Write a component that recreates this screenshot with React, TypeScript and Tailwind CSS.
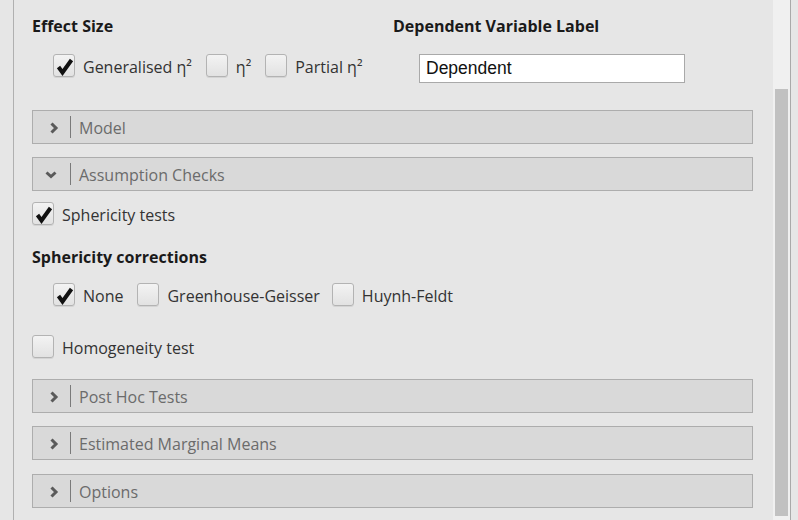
import React from "react";

const font = { fontFamily: '"Open Sans", "Noto Sans", sans-serif' };

function Check({ checked }: { checked?: boolean }) {
  return (
    <div className="relative w-[22px] h-[23px] shrink-0 rounded-[3px] border border-[#b3b3b3] bg-gradient-to-b from-[#f3f3f3] to-[#e2e2e2] shadow-[0_1px_0_rgba(0,0,0,0.08)]">
      {checked && (
        <svg className="absolute left-0 top-0" width="22" height="23" viewBox="0 0 22 23">
          <path d="M4.5 12 L8.5 17.5 L17.5 5" fill="none" stroke="#111" strokeWidth="4" strokeLinejoin="miter" strokeLinecap="butt" />
        </svg>
      )}
    </div>
  );
}

function CheckItem({ checked, label, gapAfter = 0 }: { checked?: boolean; label: string; gapAfter?: number }) {
  return (
    <div className="flex items-center h-[23px]" style={gapAfter ? { marginRight: gapAfter } : undefined}>
      <Check checked={checked} />
      <span className="ml-[8px] mt-[3px] text-[16px] leading-[20px] text-[#333333]">{label}</span>
    </div>
  );
}

function Section({ title, open }: { title: string; open?: boolean }) {
  return (
    <div className="flex items-center h-[34px] border border-[#adadad] bg-[#d9d9d9]">
      <div className="w-[37px] flex items-center justify-center">
        {open ? (
          <svg width="12" height="10" viewBox="0 0 12 10" className="mt-[2px] mr-[2px]">
            <path d="M1.5 2.5 L6 6.5 L10.5 2.5" fill="none" stroke="#5a5a5a" strokeWidth="3" />
          </svg>
        ) : (
          <svg width="10" height="12" viewBox="0 0 10 12" className="ml-[4px] mt-[1px]">
            <path d="M2.5 1.5 L7 6 L2.5 10.5" fill="none" stroke="#5a5a5a" strokeWidth="3" />
          </svg>
        )}
      </div>
      <div className="w-px h-[22px] bg-[#7a7a7a]" />
      <span className="ml-[8px] mt-[1px] text-[16px] leading-[20px] text-[#6b6b6b]">{title}</span>
    </div>
  );
}

export default function App() {
  return (
    <div className="flex w-[798px] h-[520px] bg-[#e6e6e6] overflow-hidden" style={font}>
      <div className="w-[13px] shrink-0" />
      <div className="flex-1 flex flex-col border-l border-[#b0b0b0] pl-[18px] pr-[20px] pt-[16px]">
        <div className="flex">
          <div className="w-[361px] shrink-0">
            <div className="text-[16px] leading-[20px] font-bold text-[#1a1a1a]">Effect Size</div>
            <div className="flex items-center mt-[18px] pl-[21px]">
              <CheckItem checked label="Generalised η²" gapAfter={14} />
              <CheckItem label="η²" gapAfter={14} />
              <CheckItem label="Partial η²" />
            </div>
          </div>
          <div>
            <div className="text-[16px] leading-[20px] font-bold text-[#1a1a1a]">Dependent Variable Label</div>
            <div className="mt-[18px] ml-[26px] w-[266px] h-[29px] border border-[#a9a9a9] bg-white flex items-center pl-[6px]">
              <span className="text-[17.5px] text-[#111]" style={{ fontFamily: '"Liberation Sans", Arial, sans-serif' }}>Dependent</span>
            </div>
          </div>
        </div>

        <div className="mt-[27px]">
          <Section title="Model" />
        </div>
        <div className="mt-[13px]">
          <Section title="Assumption Checks" open />
        </div>
        <div className="mt-[11px]">
          <CheckItem checked label="Sphericity tests" />
        </div>
        <div className="mt-[22px] text-[16px] leading-[20px] font-bold text-[#1a1a1a]">Sphericity corrections</div>
        <div className="mt-[16px] pl-[21px] flex items-center">
          <CheckItem checked label="None" gapAfter={14} />
          <CheckItem label="Greenhouse-Geisser" gapAfter={12} />
          <CheckItem label="Huynh-Feldt" />
        </div>
        <div className="mt-[29px]">
          <CheckItem label="Homogeneity test" />
        </div>
        <div className="mt-[21px]">
          <Section title="Post Hoc Tests" />
        </div>
        <div className="mt-[13px]">
          <Section title="Estimated Marginal Means" />
        </div>
        <div className="mt-[14px]">
          <Section title="Options" />
        </div>
      </div>
      <div className="w-[17px] shrink-0 bg-[#f0f0f0] flex flex-col pt-[89px] pb-[4px] px-[2px]">
        <div className="flex-1 bg-[#c1c1c1]" />
      </div>
      <div className="w-px shrink-0 bg-[#a9a9a9]" />
      <div className="w-[7px] shrink-0" />
    </div>
  );
}
